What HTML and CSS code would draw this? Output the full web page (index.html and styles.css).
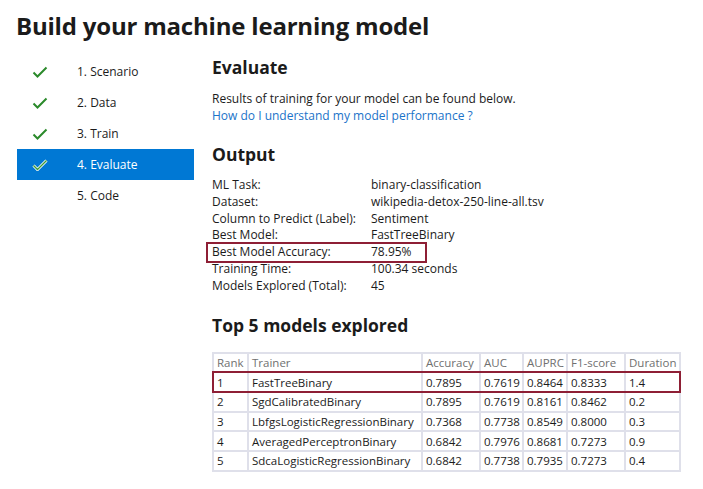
FILE: index.html
```html
<!DOCTYPE html>
<html>
<head>
<meta charset="utf-8">
<link rel="stylesheet" href="styles.css">
</head>
<body>
<h1 class="title">Build your machine learning model</h1>
<div class="layout">
  <nav class="steps">
    <div class="step"><span class="check"><svg width="16" height="12" viewBox="0 0 16 12"><path d="M1.5 6.5 L5.5 10.5 L14.5 1.5" fill="none" stroke="#2b8a2b" stroke-width="2"/></svg></span><span>1. Scenario</span></div>
    <div class="step"><span class="check"><svg width="16" height="12" viewBox="0 0 16 12"><path d="M1.5 6.5 L5.5 10.5 L14.5 1.5" fill="none" stroke="#2b8a2b" stroke-width="2"/></svg></span><span>2. Data</span></div>
    <div class="step"><span class="check"><svg width="16" height="12" viewBox="0 0 16 12"><path d="M1.5 6.5 L5.5 10.5 L14.5 1.5" fill="none" stroke="#2b8a2b" stroke-width="2"/></svg></span><span>3. Train</span></div>
    <div class="step active"><span class="check"><svg width="16" height="12" viewBox="0 0 16 12"><path d="M1.5 6.5 L5.5 10.5 L14.5 1.5" fill="none" stroke="#ffffff" stroke-width="3"/><path d="M1.5 6.5 L5.5 10.5 L14.5 1.5" fill="none" stroke="#3a9a3a" stroke-width="1.4"/></svg></span><span>4. Evaluate</span></div>
    <div class="step"><span class="check"></span><span>5. Code</span></div>
  </nav>
  <main class="content">
    <h2 class="h2 first">Evaluate</h2>
    <p class="para">Results of training for your model can be found below.<br><a class="link" href="#">How do I understand my model performance ?</a></p>
    <h2 class="h2">Output</h2>
    <div class="kv">
      <div class="row"><span class="k">ML Task:</span><span>binary-classification</span></div>
      <div class="row"><span class="k">Dataset:</span><span>wikipedia-detox-250-line-all.tsv</span></div>
      <div class="row"><span class="k">Column to Predict (Label):</span><span>Sentiment</span></div>
      <div class="row"><span class="k">Best Model:</span><span>FastTreeBinary</span></div>
      <div class="row boxed"><span class="k">Best Model Accuracy:</span><span>78.95%</span></div>
      <div class="row"><span class="k">Training Time:</span><span>100.34 seconds</span></div>
      <div class="row"><span class="k">Models Explored (Total):</span><span>45</span></div>
    </div>
    <h2 class="h2 top5">Top 5 models explored</h2>
    <table class="models">
      <colgroup>
        <col class="c-rank"><col class="c-trainer"><col class="c-acc"><col class="c-auc"><col class="c-auprc"><col class="c-f1"><col class="c-dur">
      </colgroup>
      <thead>
        <tr><th>Rank</th><th>Trainer</th><th>Accuracy</th><th>AUC</th><th>AUPRC</th><th>F1-score</th><th>Duration</th></tr>
      </thead>
      <tbody>
        <tr class="hl"><td>1</td><td>FastTreeBinary</td><td>0.7895</td><td>0.7619</td><td>0.8464</td><td>0.8333</td><td>1.4</td></tr>
        <tr><td>2</td><td>SgdCalibratedBinary</td><td>0.7895</td><td>0.7619</td><td>0.8161</td><td>0.8462</td><td>0.2</td></tr>
        <tr><td>3</td><td>LbfgsLogisticRegressionBinary</td><td>0.7368</td><td>0.7738</td><td>0.8549</td><td>0.8000</td><td>0.3</td></tr>
        <tr><td>4</td><td>AveragedPerceptronBinary</td><td>0.6842</td><td>0.7976</td><td>0.8681</td><td>0.7273</td><td>0.9</td></tr>
        <tr><td>5</td><td>SdcaLogisticRegressionBinary</td><td>0.6842</td><td>0.7738</td><td>0.7935</td><td>0.7273</td><td>0.4</td></tr>
      </tbody>
    </table>
  </main>
</div>
</body>
</html>
```
FILE: styles.css
```css
* { box-sizing: border-box; }
html, body { margin: 0; padding: 0; background: #ffffff; }
body {
  font-family: "Open Sans", "Noto Sans", sans-serif;
  color: #1b1b1b;
  font-size: 12px;
}
.title {
  margin: 0;
  padding: 8px 0 0 16px;
  font-size: 24px;
  font-weight: 700;
  line-height: 36px;
  letter-spacing: -0.2px;
}
.layout {
  display: flex;
  padding-top: 12px;
}
.steps {
  width: 194px;
  padding-left: 17px;
  flex-shrink: 0;
}
.step {
  display: flex;
  align-items: center;
  height: 31px;
  font-size: 12px;
}
.step .check {
  width: 60px;
  padding-left: 15px;
  display: flex;
  align-items: center;
}
.step.active {
  background: #0078d4;
  color: #ffffff;
}
.content {
  padding-left: 18px;
  flex: 1;
}
.h2 {
  margin: 0;
  font-size: 17.5px;
  font-weight: 700;
  line-height: 24px;
}
.h2.first { margin-top: -1px; }
.para {
  margin: 11px 0 18px 0;
  line-height: 17px;
  font-size: 12px;
}
.link { color: #1a73c9; text-decoration: none; }
.kv {
  margin-top: 11px;
  font-size: 12px;
}
.kv .row {
  display: flex;
  height: 16.8px;
  line-height: 16.8px;
}
.kv .k { width: 159px; }
.kv .row.boxed {
  outline: 2px solid #8e1f35;
  outline-offset: 0;
  margin-left: -4px;
  padding-left: 4px;
  width: 217px;
}
.top5 { margin-top: 18px; }
.models {
  margin-top: 15px;
  border-collapse: collapse;
  table-layout: fixed;
  width: 467px;
  font-size: 11.5px;
  border: 2px solid #dfe0ea;
}
.models th, .models td {
  border: 2px solid #dfe0ea;
  border-width: 0 2px 2px 0;
  padding: 0 1px 0 3px;
  height: 19.7px;
  text-align: left;
  font-weight: 400;
  white-space: nowrap;
  overflow: hidden;
}
.models th { color: #707070; }
.c-rank { width: 35px; }
.c-trainer { width: 174px; }
.c-acc { width: 58px; }
.c-auc { width: 43px; }
.c-auprc { width: 44px; }
.c-f1 { width: 58px; }
.c-dur { width: 55px; }
.models tr.hl {
  outline: 2px solid #8e1f35;
  outline-offset: -1px;
}
```
